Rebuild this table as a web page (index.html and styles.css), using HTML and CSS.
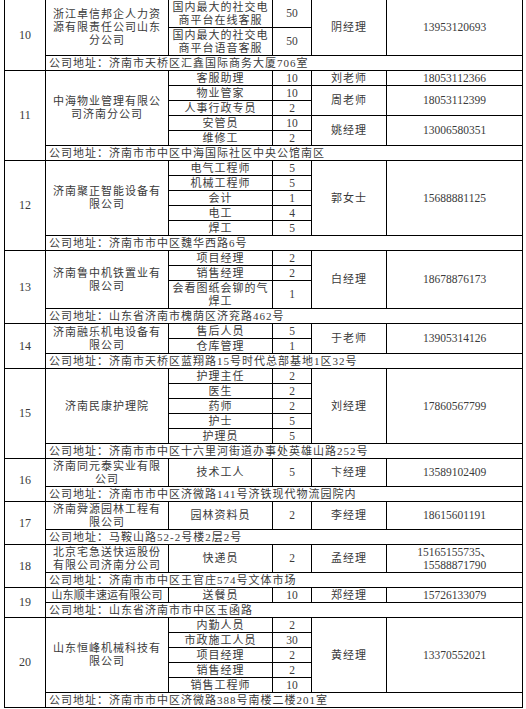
FILE: index.html
```html
<!DOCTYPE html>
<html lang="zh-CN">
<head>
<meta charset="utf-8">
<title>招聘信息表</title>
<link rel="stylesheet" href="styles.css">
</head>
<body>
<table class="jobs">
<colgroup>
<col class="c-num"><col class="c-co"><col class="c-pos"><col class="c-cnt"><col class="c-man"><col class="c-tel">
</colgroup>
<tbody>
<!-- 10 -->
<tr class="d">
<td class="num" rowspan="3">10</td>
<td class="co" rowspan="2">浙江卓信邦企人力资源有限责任公司山东分公司</td>
<td class="pos">国内最大的社交电商平台在线客服</td>
<td class="cnt">50</td>
<td class="man" rowspan="2">阴经理</td>
<td class="tel" rowspan="2">13953120693</td>
</tr>
<tr class="d">
<td class="pos">国内最大的社交电商平台语音客服</td>
<td class="cnt">50</td>
</tr>
<tr class="s"><td class="addr" colspan="5">公司地址：济南市天桥区汇鑫国际商务大厦706室</td></tr>
<!-- 11 -->
<tr class="s">
<td class="num" rowspan="6">11</td>
<td class="co" rowspan="5">中海物业管理有限公司济南分公司</td>
<td class="pos">客服助理</td>
<td class="cnt">10</td>
<td class="man">刘老师</td>
<td class="tel">18053112366</td>
</tr>
<tr class="s">
<td class="pos">物业管家</td>
<td class="cnt">10</td>
<td class="man" rowspan="2">周老师</td>
<td class="tel" rowspan="2">18053112399</td>
</tr>
<tr class="s"><td class="pos">人事行政专员</td><td class="cnt">2</td></tr>
<tr class="s">
<td class="pos">安管员</td>
<td class="cnt">10</td>
<td class="man" rowspan="2">姚经理</td>
<td class="tel" rowspan="2">13006580351</td>
</tr>
<tr class="s"><td class="pos">维修工</td><td class="cnt">2</td></tr>
<tr class="s"><td class="addr" colspan="5">公司地址：济南市市中区中海国际社区中央公馆南区</td></tr>
<!-- 12 -->
<tr class="s">
<td class="num" rowspan="6">12</td>
<td class="co" rowspan="5">济南聚正智能设备有限公司</td>
<td class="pos">电气工程师</td>
<td class="cnt">5</td>
<td class="man" rowspan="5">郭女士</td>
<td class="tel" rowspan="5">15688881125</td>
</tr>
<tr class="s"><td class="pos">机械工程师</td><td class="cnt">5</td></tr>
<tr class="s"><td class="pos">会计</td><td class="cnt">1</td></tr>
<tr class="s"><td class="pos">电工</td><td class="cnt">4</td></tr>
<tr class="s"><td class="pos">焊工</td><td class="cnt">5</td></tr>
<tr class="s"><td class="addr" colspan="5">公司地址：济南市市中区魏华西路6号</td></tr>
<!-- 13 -->
<tr class="s">
<td class="num" rowspan="4">13</td>
<td class="co" rowspan="3">济南鲁中机铁置业有限公司</td>
<td class="pos">项目经理</td>
<td class="cnt">2</td>
<td class="man" rowspan="3">白经理</td>
<td class="tel" rowspan="3">18678876173</td>
</tr>
<tr class="s"><td class="pos">销售经理</td><td class="cnt">2</td></tr>
<tr class="d"><td class="pos">会看图纸会铆的气焊工</td><td class="cnt">1</td></tr>
<tr class="s"><td class="addr" colspan="5">公司地址：山东省济南市槐荫区济兖路462号</td></tr>
<!-- 14 -->
<tr class="s">
<td class="num" rowspan="3">14</td>
<td class="co" rowspan="2">济南融乐机电设备有限公司</td>
<td class="pos">售后人员</td>
<td class="cnt">5</td>
<td class="man" rowspan="2">于老师</td>
<td class="tel" rowspan="2">13905314126</td>
</tr>
<tr class="s"><td class="pos">仓库管理</td><td class="cnt">1</td></tr>
<tr class="s"><td class="addr" colspan="5">公司地址：济南市天桥区蓝翔路15号时代总部基地1区32号</td></tr>
<!-- 15 -->
<tr class="s">
<td class="num" rowspan="6">15</td>
<td class="co" rowspan="5">济南民康护理院</td>
<td class="pos">护理主任</td>
<td class="cnt">2</td>
<td class="man" rowspan="5">刘经理</td>
<td class="tel" rowspan="5">17860567799</td>
</tr>
<tr class="s"><td class="pos">医生</td><td class="cnt">2</td></tr>
<tr class="s"><td class="pos">药师</td><td class="cnt">2</td></tr>
<tr class="s"><td class="pos">护士</td><td class="cnt">5</td></tr>
<tr class="s"><td class="pos">护理员</td><td class="cnt">5</td></tr>
<tr class="s"><td class="addr" colspan="5">公司地址：济南市市中区十六里河街道办事处英雄山路252号</td></tr>
<!-- 16 -->
<tr class="d">
<td class="num" rowspan="2">16</td>
<td class="co">济南同元泰实业有限公司</td>
<td class="pos">技术工人</td>
<td class="cnt">5</td>
<td class="man">卞经理</td>
<td class="tel">13589102409</td>
</tr>
<tr class="s"><td class="addr" colspan="5">公司地址：济南市市中区济微路141号济铁现代物流园院内</td></tr>
<!-- 17 -->
<tr class="d">
<td class="num" rowspan="2">17</td>
<td class="co">济南舜源园林工程有限公司</td>
<td class="pos">园林资料员</td>
<td class="cnt">2</td>
<td class="man">李经理</td>
<td class="tel">18615601191</td>
</tr>
<tr class="s"><td class="addr" colspan="5">公司地址：马鞍山路52-2号楼2层2号</td></tr>
<!-- 18 -->
<tr class="d">
<td class="num" rowspan="2">18</td>
<td class="co">北京宅急送快运股份有限公司济南分公司</td>
<td class="pos">快递员</td>
<td class="cnt">2</td>
<td class="man">孟经理</td>
<td class="tel">15165155735、<br>15588871790</td>
</tr>
<tr class="s"><td class="addr" colspan="5">公司地址：济南市市中区王官庄574号文体市场</td></tr>
<!-- 19 -->
<tr class="s">
<td class="num" rowspan="2">19</td>
<td class="co tight">山东顺丰速运有限公司</td>
<td class="pos">送餐员</td>
<td class="cnt">10</td>
<td class="man">郑经理</td>
<td class="tel">15726133079</td>
</tr>
<tr class="s"><td class="addr" colspan="5">公司地址：山东省济南市市中区玉函路</td></tr>
<!-- 20 -->
<tr class="s">
<td class="num" rowspan="6">20</td>
<td class="co" rowspan="5">山东恒峰机械科技有限公司</td>
<td class="pos">内勤人员</td>
<td class="cnt">2</td>
<td class="man" rowspan="5">黄经理</td>
<td class="tel" rowspan="5">13370552021</td>
</tr>
<tr class="s"><td class="pos">市政施工人员</td><td class="cnt">30</td></tr>
<tr class="s"><td class="pos">项目经理</td><td class="cnt">2</td></tr>
<tr class="s"><td class="pos">销售经理</td><td class="cnt">2</td></tr>
<tr class="s"><td class="pos">销售工程师</td><td class="cnt">10</td></tr>
<tr class="s"><td class="addr" colspan="5">公司地址：济南市市中区济微路388号南楼二楼201室</td></tr>
</tbody>
</table>
</body>
</html>
```

FILE: styles.css
```css
html, body {
  margin: 0;
  padding: 0;
  background: #fff;
}

body {
  width: 526px;
  overflow: hidden;
}

.jobs {
  border-collapse: collapse;
  table-layout: fixed;
  width: 519px;
  margin: -1px 0 0 4px;
  font-family: "Liberation Serif", "Noto Sans CJK SC", serif;
  font-size: 11px;
  color: #3a3a3a;
}

.c-num { width: 41px; }
.c-co  { width: 123px; }
.c-pos { width: 104px; }
.c-cnt { width: 39px; }
.c-man { width: 75px; }
.c-tel { width: 136px; }

.jobs td {
  border: 1px solid #000;
  padding: 0 2px;
  text-align: center;
  vertical-align: middle;
  line-height: 13px;
  letter-spacing: 1px;
  overflow: hidden;
}

.jobs tr.s { height: 15px; }
.jobs tr.d { height: 28px; }

.jobs td.num {
  font-size: 12px;
  letter-spacing: 0;
}

.jobs td.co {
  padding: 0 4px;
}

.jobs td.co.tight {
  padding: 0 1px;
  letter-spacing: 0.1px;
  white-space: nowrap;
}

.jobs td.cnt,
.jobs td.tel {
  font-size: 11.5px;
  letter-spacing: 0;
}

.jobs td.addr {
  text-align: left;
  padding-left: 3px;
  white-space: nowrap;
}
```
